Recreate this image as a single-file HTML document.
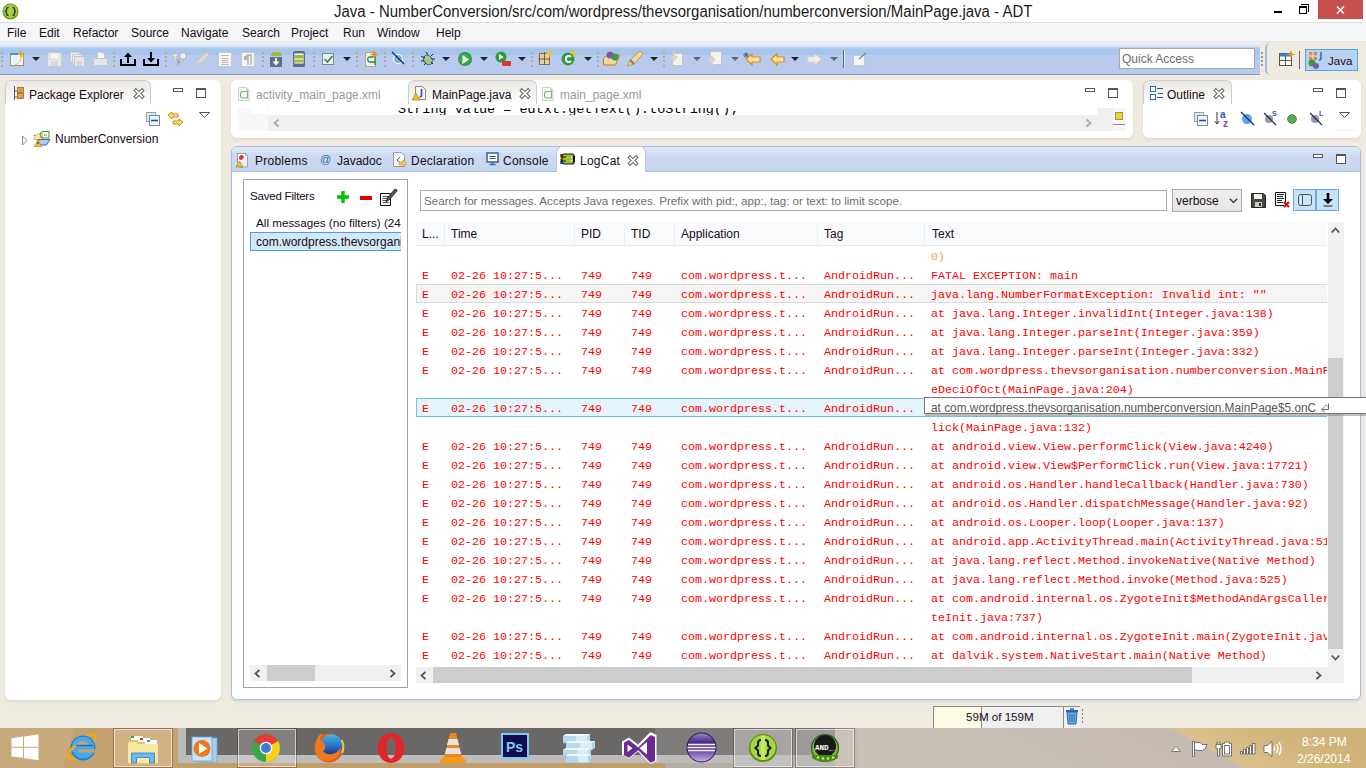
<!DOCTYPE html>
<html><head><meta charset="utf-8">
<style>
*{margin:0;padding:0;box-sizing:border-box}
html,body{width:1366px;height:768px;overflow:hidden;background:#efebe1;font-family:"Liberation Sans",sans-serif;font-size:12px;color:#000}
.a{position:absolute}
.t{position:absolute;white-space:pre;line-height:1}
.m{position:absolute;white-space:pre;line-height:1;font-family:"Liberation Mono",monospace;font-size:11.67px;color:#f00}
svg{position:absolute;overflow:visible}
.panel{position:absolute;background:#fff;border-radius:6px;box-shadow:0 2px 3px rgba(90,80,50,.10)}
</style></head><body>

<div class="a" style="left:0;top:0;width:1366px;height:22px;background:#fff"></div>
<div class="a" style="left:0;top:22px;width:1366px;height:1px;background:#dcdcdc"></div>
<svg style="left:2px;top:3px" width="17" height="17" viewBox="0 0 17 17"><circle cx="8.5" cy="8.5" r="8" fill="#6c9a1c"/><circle cx="8.5" cy="8.2" r="6.8" fill="#a8d236"/><path d="M6.5 4.5q-2 0-2 2v1l-1 1 1 1v1q0 2 2 2M10.5 4.5q2 0 2 2v1l1 1-1 1v1q0 2-2 2" stroke="#333" stroke-width="1.4" fill="none"/></svg>
<div class="t" style="left:334px;top:4px;font-size:16px;color:#1a1a1a;transform:scaleX(.936);transform-origin:0 0">Java - NumberConversion/src/com/wordpress/thevsorganisation/numberconversion/MainPage.java - ADT</div>
<div class="a" style="left:1274px;top:11px;width:8px;height:2px;background:#000"></div>
<div class="a" style="left:1299px;top:6px;width:8px;height:8px;border:1px solid #000;border-top-width:2px"></div>
<div class="a" style="left:1301px;top:4px;width:8px;height:8px;border-top:1px solid #000;border-right:1px solid #000"></div>
<div class="a" style="left:1318px;top:0;width:45px;height:19px;background:#c7504f"></div>
<svg style="left:1336px;top:6px" width="9" height="8"><path d="M1 0.5l7 7M8 0.5l-7 7" stroke="#fff" stroke-width="1.6"/></svg>
<div class="a" style="left:0;top:23px;width:1366px;height:19px;background:#f5f6f7"></div>
<div class="t" style="left:7px;top:27px;color:#1a0a1a">File</div>
<div class="t" style="left:39px;top:27px;color:#1a0a1a">Edit</div>
<div class="t" style="left:73px;top:27px;color:#1a0a1a">Refactor</div>
<div class="t" style="left:131px;top:27px;color:#1a0a1a">Source</div>
<div class="t" style="left:181px;top:27px;color:#1a0a1a">Navigate</div>
<div class="t" style="left:242px;top:27px;color:#1a0a1a">Search</div>
<div class="t" style="left:291px;top:27px;color:#1a0a1a">Project</div>
<div class="t" style="left:343px;top:27px;color:#1a0a1a">Run</div>
<div class="t" style="left:377px;top:27px;color:#1a0a1a">Window</div>
<div class="t" style="left:436px;top:27px;color:#1a0a1a">Help</div>
<div class="a" style="left:0;top:42px;width:1260px;height:32px;background:linear-gradient(#eef3fb 0px,#e2eaf7 3.5px,#a8c5ec 7px,#a7c4eb 12.5px,#b8caed 13px,#b8caed 100%)"></div>
<div class="a" style="left:0;top:74px;width:1260px;height:1px;background:#8596ba"></div>
<div class="a" style="left:0;top:41px;width:1366px;height:1px;background:#e7e8eb"></div>
<div class="a" style="left:1265px;top:43px;width:6px;height:32px;border-left:2px solid #a6bbdd;border-radius:5px 0 0 5px"></div>
<svg class="a" style="left:0;top:42px" width="1262" height="33" viewBox="0 0 1262 33"><rect x="1" y="10" width="2" height="2" fill="#b4aa92"/><rect x="1" y="14" width="2" height="2" fill="#b4aa92"/><rect x="1" y="18" width="2" height="2" fill="#b4aa92"/><rect x="1" y="23" width="2" height="2" fill="#b4aa92"/><rect x="113" y="10" width="2" height="2" fill="#b4aa92"/><rect x="113" y="14" width="2" height="2" fill="#b4aa92"/><rect x="113" y="18" width="2" height="2" fill="#b4aa92"/><rect x="113" y="23" width="2" height="2" fill="#b4aa92"/><rect x="165" y="10" width="2" height="2" fill="#b4aa92"/><rect x="165" y="14" width="2" height="2" fill="#b4aa92"/><rect x="165" y="18" width="2" height="2" fill="#b4aa92"/><rect x="165" y="23" width="2" height="2" fill="#b4aa92"/><rect x="262" y="10" width="2" height="2" fill="#b4aa92"/><rect x="262" y="14" width="2" height="2" fill="#b4aa92"/><rect x="262" y="18" width="2" height="2" fill="#b4aa92"/><rect x="262" y="23" width="2" height="2" fill="#b4aa92"/><rect x="313" y="10" width="2" height="2" fill="#b4aa92"/><rect x="313" y="14" width="2" height="2" fill="#b4aa92"/><rect x="313" y="18" width="2" height="2" fill="#b4aa92"/><rect x="313" y="23" width="2" height="2" fill="#b4aa92"/><rect x="356" y="10" width="2" height="2" fill="#b4aa92"/><rect x="356" y="14" width="2" height="2" fill="#b4aa92"/><rect x="356" y="18" width="2" height="2" fill="#b4aa92"/><rect x="356" y="23" width="2" height="2" fill="#b4aa92"/><rect x="384" y="10" width="2" height="2" fill="#b4aa92"/><rect x="384" y="14" width="2" height="2" fill="#b4aa92"/><rect x="384" y="18" width="2" height="2" fill="#b4aa92"/><rect x="384" y="23" width="2" height="2" fill="#b4aa92"/><rect x="412" y="10" width="2" height="2" fill="#b4aa92"/><rect x="412" y="14" width="2" height="2" fill="#b4aa92"/><rect x="412" y="18" width="2" height="2" fill="#b4aa92"/><rect x="412" y="23" width="2" height="2" fill="#b4aa92"/><rect x="531" y="10" width="2" height="2" fill="#b4aa92"/><rect x="531" y="14" width="2" height="2" fill="#b4aa92"/><rect x="531" y="18" width="2" height="2" fill="#b4aa92"/><rect x="531" y="23" width="2" height="2" fill="#b4aa92"/><rect x="597" y="10" width="2" height="2" fill="#b4aa92"/><rect x="597" y="14" width="2" height="2" fill="#b4aa92"/><rect x="597" y="18" width="2" height="2" fill="#b4aa92"/><rect x="597" y="23" width="2" height="2" fill="#b4aa92"/><rect x="663" y="10" width="2" height="2" fill="#b4aa92"/><rect x="663" y="14" width="2" height="2" fill="#b4aa92"/><rect x="663" y="18" width="2" height="2" fill="#b4aa92"/><rect x="663" y="23" width="2" height="2" fill="#b4aa92"/><rect x="10.5" y="11.5" width="13" height="12" fill="#eaf4fb" stroke="#b39257"/><rect x="10" y="11" width="8" height="2" fill="#4c8fd0"/><path d="M21 9v6M18 12h6" stroke="#e0a020" stroke-width="1.5"/><path d="M21 15q0 6-6 8" stroke="#f0c040" stroke-width="1" fill="none"/><path d="M32 15h8l-4 4z" fill="#222"/><rect x="47.5" y="10.5" width="14" height="14" fill="#e8e8e8" stroke="#c9c9c9"/><rect x="50" y="11" width="9" height="6" fill="#f7f7f7" stroke="#d0d0d0" stroke-width=".7"/><rect x="51" y="19" width="7" height="5" fill="#d8d8d8"/><rect x="70.5" y="10.5" width="9" height="9" fill="#eee" stroke="#ccc"/><rect x="72.5" y="12.5" width="9" height="9" fill="#eee" stroke="#ccc"/><rect x="74.5" y="14.5" width="10" height="10" fill="#e6e6e6" stroke="#c6c6c6"/><rect x="77" y="19" width="5" height="5" fill="#d6d6d6"/><path d="M97.5 10.5h5l2 2v4h-7z" fill="#f4f4f4" stroke="#ccc"/><rect x="93.5" y="16.5" width="14" height="7" rx="1" fill="#e4e4e4" stroke="#c4c4c4"/><path d="M121 17v6h14v-6" stroke="#000" stroke-width="2" fill="none"/><path d="M128 21v-7" stroke="#000" stroke-width="2"/><path d="M124 15l4-4.5 4 4.5z" fill="#000"/><path d="M144 17v6h14v-6" stroke="#000" stroke-width="2" fill="none"/><path d="M151 10v7" stroke="#000" stroke-width="2"/><path d="M147 16l4 4.5 4-4.5z" fill="#000"/><path d="M172 12h6v2h-2v5h-2v-5h-2z" fill="#e4e4e4" stroke="#bbb" stroke-width=".6"/><circle cx="183" cy="14" r="3.5" fill="#eee" stroke="#aaa"/><path d="M177 16v8l4-4z" fill="#a8a8a8"/><path d="M195 23l4-6 8-7 2 3-7 7z" fill="#dcd8cc" stroke="#c8c4b8" stroke-width=".8"/><path d="M194 23.5h7" stroke="#d0ccc0"/><rect x="218.5" y="10.5" width="13" height="14" fill="#f4f4f4" stroke="#c8c8c8"/><path d="M221 13.5h8M222 16.5h6M222 18.5h6M222 20.5h6M221 22.5h8" stroke="#bbb"/><rect x="241.5" y="10.5" width="13" height="14" fill="#f4f4f4" stroke="#c8c8c8"/><path d="M248 13v10M251 13v10M246 13h6" stroke="#b4b4b4" stroke-width="1.5"/><circle cx="246" cy="16" r="2.3" fill="#b4b4b4"/><path d="M271 14a5.5 4 0 0 1 11 0z" fill="#9fbc2e"/><path d="M272.5 9.5l1.5 2M280.5 9.5l-1.5 2" stroke="#9fbc2e"/><rect x="270" y="15" width="12" height="10" fill="#5f7086"/><path d="M276 16v4" stroke="#fff" stroke-width="2"/><path d="M272.5 19.5h7l-3.5 4z" fill="#fff"/><rect x="293" y="9" width="12" height="16" rx="1.5" fill="#5f7086"/><rect x="294.5" y="11.5" width="9" height="10" fill="#fff"/><rect x="294.5" y="13" width="9" height="3.5" fill="#9fbc2e"/><rect x="294.5" y="17.5" width="9" height="3" fill="#9fbc2e"/><rect x="322.5" y="11.5" width="11" height="11" fill="#eaf6fb" stroke="#7c8a9a"/><path d="M324.5 17l3 3 5-6" stroke="#2a8a2a" stroke-width="1.6" fill="none"/><path d="M343 15h8l-4 4z" fill="#222"/><rect x="365.5" y="10.5" width="10" height="14" fill="#eef4f6" stroke="#c0a070"/><path d="M375 20h-6a3 3 0 0 1 0-5h6v8" stroke="#2a8a2a" stroke-width="1.3" fill="none"/><path d="M374 9v7M370.5 12.5h7" stroke="#f08030" stroke-width="1.6"/><circle cx="398" cy="17" r="4.5" fill="#7fb3d5" stroke="#fff" stroke-width="1.2"/><path d="M392 10l12 12" stroke="#0a2a7a" stroke-width="1.2"/><ellipse cx="428" cy="18" rx="4" ry="5" fill="#a6c88a" stroke="#2a5a9a" transform="rotate(-35 428 18)"/><path d="M421 14l4 2M421 19l3 0M424 23l2-2M426 10l2 3M433 12l-2 2M435 17l-3 0M433 22l-2-2" stroke="#222" stroke-width="1"/><path d="M442 15h8l-4 4z" fill="#222"/><circle cx="465" cy="17" r="7" fill="#2a9a3a"/><circle cx="465" cy="17" r="5.5" fill="#3aaa4a"/><path d="M462.5 13v9l6.5-4.5z" fill="#fff"/><path d="M480 15h8l-4 4z" fill="#222"/><circle cx="501" cy="15" r="5.5" fill="#2a9a3a"/><path d="M499 12v6l4.5-3z" fill="#fff"/><rect x="502" y="19" width="9" height="5" rx="1" fill="#d33"/><path d="M518 15h8l-4 4z" fill="#222"/><rect x="539.5" y="11.5" width="10" height="11" fill="#e6cd9a" stroke="#8a6a4a"/><path d="M544.5 10v13M538 17h12" stroke="#7a5a3a"/><path d="M550 8v7M546.5 11.5h7" stroke="#f0c030" stroke-width="1.6"/><circle cx="568" cy="17" r="6.5" fill="#2a9a3a"/><path d="M571 15a3 3 0 1 0 0 4" stroke="#fff" stroke-width="2" fill="none"/><path d="M574 8v7M570.5 11.5h7" stroke="#f0c030" stroke-width="1.6"/><path d="M584 15h8l-4 4z" fill="#222"/><path d="M603.5 16l4-3h12l-4 10h-12z" fill="#f8d898" stroke="#c07a20"/><circle cx="610" cy="13" r="3.5" fill="#7a5aaa"/><circle cx="615" cy="15" r="3.5" fill="#3a9a4a"/><path d="M627 24l3-6 10-9 3 3-9 10z" fill="#f8d890" stroke="#c08a30" stroke-width=".8"/><path d="M630 18l4 4" stroke="#888" stroke-width="2.5"/><path d="M650 15h8l-4 4z" fill="#222"/><rect x="672.5" y="11.5" width="10" height="12" fill="#f4f2ec" stroke="#c8c4b8"/><path d="M674 9v8M671 14l3 4 3-4" stroke="#d8d4c8" stroke-width="2" fill="none"/><path d="M693 15h8l-4 4z" fill="#666"/><rect x="710.5" y="9.5" width="11" height="13" fill="#f4f2ec" stroke="#c8c4b8"/><path d="M712 24v-8M709 19l3-4 3 4" stroke="#d8d4c8" stroke-width="2" fill="none"/><path d="M731 15h8l-4 4z" fill="#666"/><path d="M746 17l6-5v3h8v5h-8v3z" fill="#fce4a0" stroke="#e08a10" stroke-width="1.2"/><path d="M744 11l4 4M748 11l-4 4M746 10v6M743 13h6" stroke="#2a5aaa" stroke-width=".8"/><path d="M771 17l6-5v3h7v5h-7v3z" fill="#fce4a0" stroke="#e08a10" stroke-width="1.2"/><path d="M791 15h8l-4 4z" fill="#222"/><path d="M821 17l-6-5v3h-7v5h7v3z" fill="#f0eee6" stroke="#dcd8c8" stroke-width="1"/><path d="M830 15h8l-4 4z" fill="#666"/><rect x="843" y="8" width="1" height="18" fill="#5a6a7a"/><rect x="844" y="8" width="1" height="18" fill="#e0e8f4"/><rect x="853.5" y="13.5" width="11" height="10" fill="#f4f4f4" stroke="#c8c8c8"/><path d="M859 17l7-6" stroke="#888" stroke-width="1.4"/></svg>
<div class="a" style="left:1119px;top:48px;width:136px;height:21px;background:#fff;border:1px solid #a9a9a9"></div>
<div class="t" style="left:1122px;top:53px;color:#6d6d6d;font-size:12px">Quick Access</div>
<div class="a" style="left:1261px;top:52px;width:2px;height:2px;background:#a09a8a"></div>
<div class="a" style="left:1261px;top:56px;width:2px;height:2px;background:#a09a8a"></div>
<div class="a" style="left:1261px;top:60px;width:2px;height:2px;background:#a09a8a"></div>
<div class="a" style="left:1261px;top:64px;width:2px;height:2px;background:#a09a8a"></div>
<svg style="left:1279px;top:51px" width="16" height="16"><rect x="0.5" y="2.5" width="12" height="12" fill="#fff" stroke="#555"/><rect x="0.5" y="2.5" width="12" height="3" fill="#3b7bd0"/><path d="M6.5 5v10M1 9.5h11" stroke="#555"/><path d="M12 0v7M8.5 3.5h7" stroke="#e0a020" stroke-width="1.5"/></svg>
<div class="a" style="left:1299px;top:51px;width:1px;height:18px;background:#666"></div>
<div class="a" style="left:1305px;top:49px;width:53px;height:22px;background:#b7d3ef;border:1px solid #5aa0e6"></div>
<svg style="left:1308px;top:52px" width="18" height="17"><rect x="1" y="0" width="8" height="8" fill="#c8906a"/><path d="M5 0v8M1 4h8" stroke="#fff" stroke-width=".8"/><path d="M13 0v6q0 2-2 2" stroke="#2a6ab8" stroke-width="1.5" fill="none"/><circle cx="4" cy="11" r="3.5" fill="#3a9a3a"/><circle cx="8" cy="14" r="3" fill="#7a5ab0"/></svg>
<div class="t" style="left:1328px;top:56px;color:#1a0a1a;font-size:11.5px">Java</div>
<div class="panel" style="left:5px;top:80px;width:216px;height:620px"></div>
<div class="a" style="left:5px;top:80px;width:146px;height:24px;border-radius:6px 6px 0 0;border:1px solid #c8d0dc;border-bottom:none;background:linear-gradient(#ece9e2,#f6f5f2 60%,#fff)"></div>
<svg style="left:13px;top:86px" width="12" height="14"><path d="M1.5 0v14M1.5 5h3M1.5 11h3" stroke="#556" stroke-width="1"/><rect x="4.5" y="1.5" width="6" height="5" fill="#d9a050" stroke="#b06020" stroke-width=".8"/><rect x="4.5" y="7.5" width="6" height="5" fill="#d9a050" stroke="#b06020" stroke-width=".8"/></svg>
<div class="t" style="left:29px;top:89px;color:#1a0a1a">Package Explorer</div>
<svg style="left:133px;top:88px" width="12" height="12"><path d="M2.9 2.4l6.2 6.2M9.1 2.4l-6.2 6.2" stroke="#606060" stroke-width="3.6" stroke-linecap="square"/><path d="M2.9 2.4l6.2 6.2M9.1 2.4l-6.2 6.2" stroke="#fff" stroke-width="1.6" stroke-linecap="square"/></svg>
<div class="a" style="left:173px;top:88px;width:10px;height:4px;border:1px solid #555;background:#fff"></div>
<div class="a" style="left:196px;top:88px;width:10px;height:10px;border:1px solid #555;border-top-width:2px;background:#fff"></div>
<svg style="left:146px;top:112px" width="14" height="14"><rect x="0.5" y="0.5" width="9" height="9" fill="#dde8f4" stroke="#8aa"/><rect x="3.5" y="3.5" width="10" height="10" fill="#eef4fa" stroke="#6a8ab0"/><path d="M5 8.5h7" stroke="#1a4a9a" stroke-width="1.5"/></svg>
<svg style="left:167px;top:111px" width="17" height="16"><path d="M1 4l4-3v2h6v3h-6v2z" fill="#fcdc80" stroke="#d08a10"/><path d="M16 11l-4-3v2h-6v3h6v2z" fill="#fcdc80" stroke="#d08a10"/></svg>
<svg style="left:199px;top:112px" width="11" height="7"><path d="M0.5 0.5h10l-5 5z" fill="#fff" stroke="#555"/></svg>
<svg style="left:21px;top:135px" width="7" height="11"><path d="M1.5 1l4.5 4.5-4.5 4.5z" fill="#fff" stroke="#888"/></svg>
<svg style="left:33px;top:130px" width="18" height="18"><path d="M1 5h3l1.5-1.5h4v6h-8.5z" fill="#f6e4b0" stroke="#c8a860" stroke-width=".7"/><path d="M1 6l1-1" stroke="#666"/><path d="M5 9.5h12l-3.5 5.5h-8z" fill="#a8d0f4" stroke="#3a5ab0" stroke-width=".9"/><path d="M16 1.5h-5.5a2.2 2.2 0 0 0 0 6.5h5.5z" fill="none" stroke="#5a9a20" stroke-width="1.1"/><path d="M11 5h3" stroke="#5a9a20"/><path d="M5 10l3.8 6.5h-7.6z" fill="#f4c040" stroke="#c07a10" stroke-width=".7"/><path d="M5 12v2.3" stroke="#611" stroke-width="1.1"/></svg>
<div class="t" style="left:55px;top:133px;color:#1a0a1a">NumberConversion</div>
<div class="panel" style="left:231px;top:80px;width:902px;height:58px"></div>
<svg style="left:237px;top:86px" width="13" height="15"><path d="M1.5 1.5h8l2.5 2.5v10.5h-10.5z" fill="#f6f9fd" stroke="#cfcfcf"/><path d="M9 1.5h1l2 2v1h-3z" fill="#f8c890"/><path d="M10 5.5h-5l-1.5 1.5v3.5l1.5 1.5h5M10.5 5v7.5" stroke="#7ab86a" stroke-width="1.1" fill="none"/></svg>
<div class="t" style="left:256px;top:89px;color:#9a9a9a">activity_main_page.xml</div>
<div class="a" style="left:408px;top:80px;width:129px;height:24px;border-radius:6px 6px 0 0;border:1px solid #c8d0dc;border-bottom:none;background:linear-gradient(#ece9e2,#f6f5f2 60%,#fff)"></div>
<svg style="left:412px;top:86px" width="14" height="15"><path d="M3.5 0.5h7l3 3v10h-10z" fill="#eef4fc" stroke="#8a6a4a" stroke-width=".8"/><path d="M9.5 3v6q0 2-2 2" stroke="#2a5ab0" stroke-width="1.6" fill="none"/><path d="M4 7l4 7h-8z" fill="#f4c020" stroke="#a07010" stroke-width=".6"/></svg>
<div class="t" style="left:432px;top:89px;color:#1a0a1a">MainPage.java</div>
<svg style="left:519px;top:88px" width="12" height="12"><path d="M2.9 2.4l6.2 6.2M9.1 2.4l-6.2 6.2" stroke="#606060" stroke-width="3.6" stroke-linecap="square"/><path d="M2.9 2.4l6.2 6.2M9.1 2.4l-6.2 6.2" stroke="#fff" stroke-width="1.6" stroke-linecap="square"/></svg>
<svg style="left:541px;top:86px" width="13" height="15"><path d="M1.5 1.5h8l2.5 2.5v10.5h-10.5z" fill="#f6f9fd" stroke="#cfcfcf"/><path d="M9 1.5h1l2 2v1h-3z" fill="#f8c890"/><path d="M10 5.5h-5l-1.5 1.5v3.5l1.5 1.5h5M10.5 5v7.5" stroke="#7ab86a" stroke-width="1.1" fill="none"/></svg>
<div class="t" style="left:560px;top:89px;color:#9a9a9a">main_page.xml</div>
<div class="a" style="left:1085px;top:88px;width:10px;height:4px;border:1px solid #555;background:#fff"></div>
<div class="a" style="left:1108px;top:88px;width:10px;height:10px;border:1px solid #555;border-top-width:2px;background:#fff"></div>
<div class="a" style="left:238px;top:108px;width:880px;height:7px;overflow:hidden"><div class="t" style="left:160px;top:-5px;font-family:'Liberation Mono',monospace;font-size:13.5px;color:#000">String value = edtxt.getText().toString();</div></div>
<div class="a" style="left:238px;top:108px;width:30px;height:23px;background:#f7f7f7"></div>
<div class="a" style="left:250px;top:108px;width:17px;height:6px;background:#fff"></div>
<div class="a" style="left:268px;top:115px;width:845px;height:16px;background:#efefef"></div>
<div class="a" style="left:1097px;top:108px;width:16px;height:8px;background:#efefef"></div>
<svg style="left:273px;top:119px" width="7" height="8"><path d="M5.5 0.5l-4 3.5 4 3.5" stroke="#aaa" stroke-width="1.8" fill="none"/></svg>
<svg style="left:1085px;top:119px" width="7" height="8"><path d="M1.5 0.5l4 3.5-4 3.5" stroke="#aaa" stroke-width="1.8" fill="none"/></svg>
<div class="a" style="left:1113px;top:108px;width:13px;height:23px;background:#f7f7f7"></div>
<div class="a" style="left:1115px;top:112px;width:8px;height:8px;background:#fcd400;border:1px solid #8a90a4"></div>
<div class="a" style="left:1113px;top:124px;width:12px;height:1px;background:#888"></div>
<div class="panel" style="left:1143px;top:80px;width:218px;height:58px"></div>
<div class="a" style="left:1143px;top:80px;width:89px;height:24px;border-radius:6px 6px 0 0;border:1px solid #c8d0dc;border-bottom:none;background:linear-gradient(#ece9e2,#f6f5f2 60%,#fff)"></div>
<svg style="left:1150px;top:86px" width="14" height="14"><rect x="0.5" y="0.5" width="5" height="5" fill="#fff" stroke="#2a6ab8"/><rect x="0.5" y="8.5" width="5" height="5" fill="#fff" stroke="#2a6ab8"/><path d="M7 2.5h6M8 7.5h5M7 11.5h6" stroke="#2a5a9a"/></svg>
<div class="t" style="left:1167px;top:89px;color:#1a0a1a">Outline</div>
<svg style="left:1213px;top:88px" width="12" height="12"><path d="M2.9 2.4l6.2 6.2M9.1 2.4l-6.2 6.2" stroke="#606060" stroke-width="3.6" stroke-linecap="square"/><path d="M2.9 2.4l6.2 6.2M9.1 2.4l-6.2 6.2" stroke="#fff" stroke-width="1.6" stroke-linecap="square"/></svg>
<div class="a" style="left:1313px;top:88px;width:10px;height:4px;border:1px solid #555;background:#fff"></div>
<div class="a" style="left:1336px;top:88px;width:10px;height:10px;border:1px solid #555;border-top-width:2px;background:#fff"></div>
<svg style="left:1194px;top:112px" width="14" height="14"><rect x="0.5" y="0.5" width="9" height="9" fill="#dde8f4" stroke="#8aa"/><rect x="3.5" y="3.5" width="10" height="10" fill="#eef4fa" stroke="#6a8ab0"/><path d="M5 8.5h7" stroke="#1a4a9a" stroke-width="1.5"/></svg>
<svg style="left:1214px;top:110px" width="18" height="18"><path d="M3 2v12M0.5 11l2.5 3 2.5-3" stroke="#333" fill="none"/><text x="6" y="8" font-size="10" font-weight="bold" fill="#2a5aa8" font-family="Liberation Sans">a</text><text x="9" y="17" font-size="10" font-weight="bold" fill="#8a3aa0" font-family="Liberation Sans">z</text></svg>
<svg style="left:1240px;top:111px" width="15" height="15"><circle cx="7" cy="8" r="5.5" fill="#5aa6e0" stroke="#fff" stroke-width="1"/><path d="M1 1l13 13" stroke="#0a2a7a" stroke-width="1.2"/></svg>
<svg style="left:1263px;top:110px" width="15" height="16"><circle cx="6" cy="9" r="4" fill="#999"/><path d="M1 3l12 12" stroke="#0a2a7a" stroke-width="1.2"/><text x="9" y="6" font-size="7" font-weight="bold" fill="#2a5aa8" font-family="Liberation Sans">S</text></svg>
<svg style="left:1287px;top:114px" width="10" height="10"><circle cx="5" cy="5" r="4.3" fill="#5aaa5a" stroke="#3a8a3a"/></svg>
<svg style="left:1309px;top:110px" width="15" height="16"><circle cx="6" cy="9" r="4" fill="#999"/><path d="M1 3l12 12" stroke="#0a2a7a" stroke-width="1.2"/><text x="10" y="6" font-size="7" font-weight="bold" fill="#2a5aa8" font-family="Liberation Sans">L</text></svg>
<svg style="left:1339px;top:112px" width="11" height="7"><path d="M0.5 0.5h10l-5 5z" fill="#fff" stroke="#555"/></svg>
<div class="a" style="left:1337px;top:130px;width:18px;height:1px;background:#eee"></div>
<div class="panel" style="left:231px;top:146px;width:1130px;height:554px;border:1px solid #a6bde0"></div>
<div class="a" style="left:232px;top:147px;width:1128px;height:24px;border-radius:5px 5px 0 0;background:linear-gradient(#dfe8f5,#cbdaf0 40%,#c6d6ef)"></div>
<div class="a" style="left:232px;top:171px;width:1128px;height:1px;background:#a9bcdc"></div>
<svg style="left:236px;top:153px" width="14" height="15"><rect x="1.5" y="0.5" width="8" height="9" fill="#fff" stroke="#888" stroke-width=".8"/><circle cx="5.5" cy="4.5" r="2.5" fill="#e03030"/><path d="M9.5 2h2v12h-8v-4" fill="#eef" stroke="#8899aa" stroke-width=".8"/><path d="M3.5 8l3.5 6h-7z" fill="#f4c020" stroke="#a07010" stroke-width=".6"/></svg>
<div class="t" style="left:255px;top:155px;color:#1a0a1a;letter-spacing:.25px">Problems</div>
<div class="t" style="left:320px;top:154px;color:#2a70b0;font-size:11px">@</div>
<div class="t" style="left:337px;top:155px;color:#1a0a1a">Javadoc</div>
<svg style="left:393px;top:152px" width="14" height="16"><path d="M0.5 0.5h8l3 3v11h-11z" fill="#f8f8f4" stroke="#888" stroke-width=".8"/><path d="M7 5l-3 3 3 3" stroke="#2a6ab0" fill="none"/><path d="M6 10h4v-2l4 3.5-4 3.5v-2h-4z" fill="#f4c860" stroke="#c08a20" stroke-width=".6"/></svg>
<div class="t" style="left:411px;top:155px;color:#1a0a1a;letter-spacing:.25px">Declaration</div>
<svg style="left:486px;top:152px" width="13" height="14"><rect x="1" y="1" width="11" height="9" fill="#fff" stroke="#3a6aa8" stroke-width="1.6"/><path d="M3.5 4.5h6M3.5 6.5h4M7.5 6.5h2" stroke="#2a4a88" stroke-width="1"/><path d="M6.5 10v2M3.5 12.5h6" stroke="#3a6aa8" stroke-width="1.4"/></svg>
<div class="t" style="left:503px;top:155px;color:#1a0a1a;letter-spacing:.25px">Console</div>
<div class="a" style="left:556px;top:146px;width:90px;height:26px;background:#fff;border-radius:6px 6px 0 0;border:1px solid #b8c8e0;border-bottom:none"></div>
<svg style="left:560px;top:153px" width="17" height="13"><path d="M0 1h5v10h-5z" fill="#f33"/><path d="M0 4h4v2h-4z" fill="#fc0"/><path d="M0 6h4v2h-4z" fill="#3c3"/><path d="M0 8h4v3h-4z" fill="#36f"/><rect x="2" y="1" width="12" height="10" rx="2" fill="#9cc23c" stroke="#111" stroke-width="1.2"/><path d="M2 4h4M2 8h4" stroke="#111" stroke-width="1.2"/><path d="M14 3v6" stroke="#111" stroke-width="2"/><circle cx="11.5" cy="4.5" r=".8" fill="#fff"/><circle cx="11.5" cy="7.5" r=".8" fill="#fff"/></svg>
<div class="t" style="left:580px;top:155px;color:#1a0a1a;letter-spacing:.25px">LogCat</div>
<svg style="left:627px;top:155px" width="12" height="12"><path d="M2.9 2.4l6.2 6.2M9.1 2.4l-6.2 6.2" stroke="#606060" stroke-width="3.6" stroke-linecap="square"/><path d="M2.9 2.4l6.2 6.2M9.1 2.4l-6.2 6.2" stroke="#fff" stroke-width="1.6" stroke-linecap="square"/></svg>
<div class="a" style="left:1313px;top:154px;width:10px;height:4px;border:1px solid #555;background:#fff"></div>
<div class="a" style="left:1336px;top:154px;width:10px;height:10px;border:1px solid #555;border-top-width:2px;background:#fff"></div>
<div class="a" style="left:243px;top:179px;width:165px;height:509px;border:1px solid #a3a3a3;background:#fff"></div>
<div class="t" style="left:250px;top:191px;color:#1a0a1a;font-size:11.5px;letter-spacing:-.2px">Saved Filters</div>
<svg style="left:337px;top:191px" width="12" height="12"><path d="M6 0v12M0 6h12" stroke="#00c400" stroke-width="3.4"/></svg>
<div class="a" style="left:360px;top:196px;width:12px;height:4px;background:#e00000"></div>
<svg style="left:380px;top:188px" width="18" height="18"><path d="M0.5 5.5h10v12h-10z" fill="#fff" stroke="#111"/><path d="M2.5 8.5h6M2.5 10.5h6M2.5 12.5h6M2.5 14.5h6" stroke="#222" stroke-width=".8"/><path d="M6 14l2-5 7-8q2 0 2 2l-7 8z" fill="#555" stroke="#222" stroke-width=".8"/></svg>
<div class="t" style="left:256px;top:217px;color:#1a0a1a;font-size:11.7px">All messages (no filters) (24</div>
<div class="a" style="left:250px;top:232px;width:151px;height:19px;background:#d2e8f6;border:1px solid #4aa0de;border-right:none;overflow:hidden"><div class="t" style="left:5px;top:3px;color:#1a0a1a">com.wordpress.thevsorganisation</div></div>
<div class="a" style="left:250px;top:665px;width:151px;height:16px;background:#f0f0f0"></div>
<div class="a" style="left:267px;top:665px;width:48px;height:16px;background:#cdcdcd"></div>
<svg style="left:254px;top:669px" width="7" height="9"><path d="M5.5 0.8l-4 3.7 4 3.7" stroke="#555" stroke-width="1.8" fill="none"/></svg>
<svg style="left:389px;top:669px" width="7" height="9"><path d="M1.5 0.8l4 3.7-4 3.7" stroke="#555" stroke-width="1.8" fill="none"/></svg>
<div class="a" style="left:420px;top:190px;width:747px;height:21px;border:1px solid #ababab;background:#fff"></div>
<div class="t" style="left:424px;top:195px;color:#6d6d6d;font-size:11.6px">Search for messages. Accepts Java regexes. Prefix with pid:, app:, tag: or text: to limit scope.</div>
<div class="a" style="left:1172px;top:189px;width:70px;height:23px;border:1px solid #acacac;background:linear-gradient(#f0f0f0,#e5e5e5)"></div>
<div class="t" style="left:1176px;top:195px;color:#1a0a1a">verbose</div>
<svg style="left:1229px;top:198px" width="9" height="6"><path d="M0.8 0.8l3.7 3.7 3.7-3.7" stroke="#444" stroke-width="1.5" fill="none"/></svg>
<svg style="left:1251px;top:193px" width="15" height="15"><path d="M0.5 0.5h12l2 2v12h-14z" fill="#4a4a3a" stroke="#222"/><rect x="3" y="1" width="8" height="5" fill="#f0f0f0"/><rect x="4" y="9" width="7" height="5" fill="#ccc"/><rect x="8" y="10" width="2" height="3" fill="#333"/></svg>
<svg style="left:1275px;top:192px" width="15" height="17"><path d="M0.5 0.5h10v13h-10z" fill="#fff" stroke="#111"/><path d="M2 2.5h7M2 4.5h6M2 6.5h7M2 8.5h5M2 10.5h6" stroke="#222" stroke-width="1"/><path d="M9 10l5 5M14 10l-5 5" stroke="#e00" stroke-width="2"/></svg>
<div class="a" style="left:1293px;top:189px;width:46px;height:22px;border:1px solid #66a8ea;background:#c8e3fa"></div>
<div class="a" style="left:1315px;top:189px;width:2px;height:22px;background:#66a8ea"></div>
<svg style="left:1298px;top:194px" width="14" height="13"><rect x="0.5" y="0.5" width="13" height="11" rx="2" fill="none" stroke="#555"/><path d="M4.5 0.5v11" stroke="#555"/></svg>
<svg style="left:1321px;top:193px" width="14" height="14"><path d="M7 0v7" stroke="#000" stroke-width="2.6"/><path d="M2 6h10l-5 5z" fill="#000"/><path d="M2.5 13h9" stroke="#555" stroke-width="1.4"/></svg>
<div class="a" style="left:416px;top:222px;width:911px;height:24px;background:#fafbfc;border-bottom:1px solid #e3ecf6"></div>
<div class="a" style="left:444px;top:222px;width:1px;height:23px;background:#eaf0f7"></div>
<div class="a" style="left:574px;top:222px;width:1px;height:23px;background:#eaf0f7"></div>
<div class="a" style="left:624px;top:222px;width:1px;height:23px;background:#eaf0f7"></div>
<div class="a" style="left:674px;top:222px;width:1px;height:23px;background:#eaf0f7"></div>
<div class="a" style="left:817px;top:222px;width:1px;height:23px;background:#eaf0f7"></div>
<div class="a" style="left:924px;top:222px;width:1px;height:23px;background:#eaf0f7"></div>
<div class="t" style="left:422px;top:228px;color:#1a0a1a">L...</div>
<div class="t" style="left:451px;top:228px;color:#1a0a1a">Time</div>
<div class="t" style="left:581px;top:228px;color:#1a0a1a">PID</div>
<div class="t" style="left:631px;top:228px;color:#1a0a1a">TID</div>
<div class="t" style="left:681px;top:228px;color:#1a0a1a">Application</div>
<div class="t" style="left:824px;top:228px;color:#1a0a1a">Tag</div>
<div class="t" style="left:932px;top:228px;color:#1a0a1a">Text</div>
<div class="a" style="left:1328px;top:222px;width:16px;height:445px;background:#f0f0f0"></div>
<div class="a" style="left:1328px;top:358px;width:15px;height:291px;background:#cdcdcd"></div>
<svg style="left:1331px;top:227px" width="9" height="7"><path d="M0.8 5.5l3.7-4 3.7 4" stroke="#555" stroke-width="1.8" fill="none"/></svg>
<svg style="left:1331px;top:654px" width="9" height="7"><path d="M0.8 1.5l3.7 4 3.7-4" stroke="#555" stroke-width="1.8" fill="none"/></svg>
<div class="a" style="left:416px;top:667px;width:928px;height:16px;background:#f0f0f0"></div>
<div class="a" style="left:433px;top:667px;width:759px;height:16px;background:#cdcdcd"></div>
<svg style="left:420px;top:671px" width="7" height="9"><path d="M5.5 0.8l-4 3.7 4 3.7" stroke="#555" stroke-width="1.8" fill="none"/></svg>
<svg style="left:1315px;top:671px" width="7" height="9"><path d="M1.5 0.8l4 3.7-4 3.7" stroke="#555" stroke-width="1.8" fill="none"/></svg>
<div class="a" style="left:416px;top:246px;width:911px;height:420px;overflow:hidden">
<div class="m" style="left:515px;top:5.5px;color:#f7a040">0)</div>
<div class="m" style="left:6px;top:24.5px">E</div>
<div class="m" style="left:35px;top:24.5px">02-26 10:27:5...</div>
<div class="m" style="left:165px;top:24.5px">749</div>
<div class="m" style="left:215px;top:24.5px">749</div>
<div class="m" style="left:265px;top:24.5px">com.wordpress.t...</div>
<div class="m" style="left:408px;top:24.5px">AndroidRun...</div>
<div class="m" style="left:515px;top:24.5px;color:#f00">FATAL EXCEPTION: main</div>
<div class="a" style="left:0;top:37.5px;width:911px;height:19px;background:#f5f5f5;border:1px solid #dadada;border-right:none"></div>
<div class="m" style="left:6px;top:43.5px">E</div>
<div class="m" style="left:35px;top:43.5px">02-26 10:27:5...</div>
<div class="m" style="left:165px;top:43.5px">749</div>
<div class="m" style="left:215px;top:43.5px">749</div>
<div class="m" style="left:265px;top:43.5px">com.wordpress.t...</div>
<div class="m" style="left:408px;top:43.5px">AndroidRun...</div>
<div class="m" style="left:515px;top:43.5px;color:#f00">java.lang.NumberFormatException: Invalid int: &quot;&quot;</div>
<div class="m" style="left:6px;top:62.5px">E</div>
<div class="m" style="left:35px;top:62.5px">02-26 10:27:5...</div>
<div class="m" style="left:165px;top:62.5px">749</div>
<div class="m" style="left:215px;top:62.5px">749</div>
<div class="m" style="left:265px;top:62.5px">com.wordpress.t...</div>
<div class="m" style="left:408px;top:62.5px">AndroidRun...</div>
<div class="m" style="left:515px;top:62.5px;color:#f00">at java.lang.Integer.invalidInt(Integer.java:138)</div>
<div class="m" style="left:6px;top:81.5px">E</div>
<div class="m" style="left:35px;top:81.5px">02-26 10:27:5...</div>
<div class="m" style="left:165px;top:81.5px">749</div>
<div class="m" style="left:215px;top:81.5px">749</div>
<div class="m" style="left:265px;top:81.5px">com.wordpress.t...</div>
<div class="m" style="left:408px;top:81.5px">AndroidRun...</div>
<div class="m" style="left:515px;top:81.5px;color:#f00">at java.lang.Integer.parseInt(Integer.java:359)</div>
<div class="m" style="left:6px;top:100.5px">E</div>
<div class="m" style="left:35px;top:100.5px">02-26 10:27:5...</div>
<div class="m" style="left:165px;top:100.5px">749</div>
<div class="m" style="left:215px;top:100.5px">749</div>
<div class="m" style="left:265px;top:100.5px">com.wordpress.t...</div>
<div class="m" style="left:408px;top:100.5px">AndroidRun...</div>
<div class="m" style="left:515px;top:100.5px;color:#f00">at java.lang.Integer.parseInt(Integer.java:332)</div>
<div class="m" style="left:6px;top:119.5px">E</div>
<div class="m" style="left:35px;top:119.5px">02-26 10:27:5...</div>
<div class="m" style="left:165px;top:119.5px">749</div>
<div class="m" style="left:215px;top:119.5px">749</div>
<div class="m" style="left:265px;top:119.5px">com.wordpress.t...</div>
<div class="m" style="left:408px;top:119.5px">AndroidRun...</div>
<div class="m" style="left:515px;top:119.5px;color:#f00">at com.wordpress.thevsorganisation.numberconversion.MainPage.convert</div>
<div class="m" style="left:515px;top:138.5px;color:#f00">eDeciOfOct(MainPage.java:204)</div>
<div class="a" style="left:0;top:152px;width:911px;height:19px;background:#e5f3fb;border:1px solid #70c0e8;border-right:none"></div>
<div class="m" style="left:6px;top:157.5px">E</div>
<div class="m" style="left:35px;top:157.5px">02-26 10:27:5...</div>
<div class="m" style="left:165px;top:157.5px">749</div>
<div class="m" style="left:215px;top:157.5px">749</div>
<div class="m" style="left:265px;top:157.5px">com.wordpress.t...</div>
<div class="m" style="left:408px;top:157.5px">AndroidRun...</div>
<div class="m" style="left:515px;top:157.5px;color:#f00">at com.wordpress.thevsorganisation.numberconversion.MainPage$5.onC</div>
<div class="m" style="left:515px;top:176.5px;color:#f00">lick(MainPage.java:132)</div>
<div class="m" style="left:6px;top:195.5px">E</div>
<div class="m" style="left:35px;top:195.5px">02-26 10:27:5...</div>
<div class="m" style="left:165px;top:195.5px">749</div>
<div class="m" style="left:215px;top:195.5px">749</div>
<div class="m" style="left:265px;top:195.5px">com.wordpress.t...</div>
<div class="m" style="left:408px;top:195.5px">AndroidRun...</div>
<div class="m" style="left:515px;top:195.5px;color:#f00">at android.view.View.performClick(View.java:4240)</div>
<div class="m" style="left:6px;top:214.5px">E</div>
<div class="m" style="left:35px;top:214.5px">02-26 10:27:5...</div>
<div class="m" style="left:165px;top:214.5px">749</div>
<div class="m" style="left:215px;top:214.5px">749</div>
<div class="m" style="left:265px;top:214.5px">com.wordpress.t...</div>
<div class="m" style="left:408px;top:214.5px">AndroidRun...</div>
<div class="m" style="left:515px;top:214.5px;color:#f00">at android.view.View$PerformClick.run(View.java:17721)</div>
<div class="m" style="left:6px;top:233.5px">E</div>
<div class="m" style="left:35px;top:233.5px">02-26 10:27:5...</div>
<div class="m" style="left:165px;top:233.5px">749</div>
<div class="m" style="left:215px;top:233.5px">749</div>
<div class="m" style="left:265px;top:233.5px">com.wordpress.t...</div>
<div class="m" style="left:408px;top:233.5px">AndroidRun...</div>
<div class="m" style="left:515px;top:233.5px;color:#f00">at android.os.Handler.handleCallback(Handler.java:730)</div>
<div class="m" style="left:6px;top:252.5px">E</div>
<div class="m" style="left:35px;top:252.5px">02-26 10:27:5...</div>
<div class="m" style="left:165px;top:252.5px">749</div>
<div class="m" style="left:215px;top:252.5px">749</div>
<div class="m" style="left:265px;top:252.5px">com.wordpress.t...</div>
<div class="m" style="left:408px;top:252.5px">AndroidRun...</div>
<div class="m" style="left:515px;top:252.5px;color:#f00">at android.os.Handler.dispatchMessage(Handler.java:92)</div>
<div class="m" style="left:6px;top:271.5px">E</div>
<div class="m" style="left:35px;top:271.5px">02-26 10:27:5...</div>
<div class="m" style="left:165px;top:271.5px">749</div>
<div class="m" style="left:215px;top:271.5px">749</div>
<div class="m" style="left:265px;top:271.5px">com.wordpress.t...</div>
<div class="m" style="left:408px;top:271.5px">AndroidRun...</div>
<div class="m" style="left:515px;top:271.5px;color:#f00">at android.os.Looper.loop(Looper.java:137)</div>
<div class="m" style="left:6px;top:290.5px">E</div>
<div class="m" style="left:35px;top:290.5px">02-26 10:27:5...</div>
<div class="m" style="left:165px;top:290.5px">749</div>
<div class="m" style="left:215px;top:290.5px">749</div>
<div class="m" style="left:265px;top:290.5px">com.wordpress.t...</div>
<div class="m" style="left:408px;top:290.5px">AndroidRun...</div>
<div class="m" style="left:515px;top:290.5px;color:#f00">at android.app.ActivityThread.main(ActivityThread.java:5103)</div>
<div class="m" style="left:6px;top:309.5px">E</div>
<div class="m" style="left:35px;top:309.5px">02-26 10:27:5...</div>
<div class="m" style="left:165px;top:309.5px">749</div>
<div class="m" style="left:215px;top:309.5px">749</div>
<div class="m" style="left:265px;top:309.5px">com.wordpress.t...</div>
<div class="m" style="left:408px;top:309.5px">AndroidRun...</div>
<div class="m" style="left:515px;top:309.5px;color:#f00">at java.lang.reflect.Method.invokeNative(Native Method)</div>
<div class="m" style="left:6px;top:328.5px">E</div>
<div class="m" style="left:35px;top:328.5px">02-26 10:27:5...</div>
<div class="m" style="left:165px;top:328.5px">749</div>
<div class="m" style="left:215px;top:328.5px">749</div>
<div class="m" style="left:265px;top:328.5px">com.wordpress.t...</div>
<div class="m" style="left:408px;top:328.5px">AndroidRun...</div>
<div class="m" style="left:515px;top:328.5px;color:#f00">at java.lang.reflect.Method.invoke(Method.java:525)</div>
<div class="m" style="left:6px;top:347.5px">E</div>
<div class="m" style="left:35px;top:347.5px">02-26 10:27:5...</div>
<div class="m" style="left:165px;top:347.5px">749</div>
<div class="m" style="left:215px;top:347.5px">749</div>
<div class="m" style="left:265px;top:347.5px">com.wordpress.t...</div>
<div class="m" style="left:408px;top:347.5px">AndroidRun...</div>
<div class="m" style="left:515px;top:347.5px;color:#f00">at com.android.internal.os.ZygoteInit$MethodAndArgsCaller.run(Zygo</div>
<div class="m" style="left:515px;top:366.5px;color:#f00">teInit.java:737)</div>
<div class="m" style="left:6px;top:385.5px">E</div>
<div class="m" style="left:35px;top:385.5px">02-26 10:27:5...</div>
<div class="m" style="left:165px;top:385.5px">749</div>
<div class="m" style="left:215px;top:385.5px">749</div>
<div class="m" style="left:265px;top:385.5px">com.wordpress.t...</div>
<div class="m" style="left:408px;top:385.5px">AndroidRun...</div>
<div class="m" style="left:515px;top:385.5px;color:#f00">at com.android.internal.os.ZygoteInit.main(ZygoteInit.java:553)</div>
<div class="m" style="left:6px;top:404.5px">E</div>
<div class="m" style="left:35px;top:404.5px">02-26 10:27:5...</div>
<div class="m" style="left:165px;top:404.5px">749</div>
<div class="m" style="left:215px;top:404.5px">749</div>
<div class="m" style="left:265px;top:404.5px">com.wordpress.t...</div>
<div class="m" style="left:408px;top:404.5px">AndroidRun...</div>
<div class="m" style="left:515px;top:404.5px;color:#f00">at dalvik.system.NativeStart.main(Native Method)</div>
</div>
<div class="a" style="left:925px;top:400px;width:441px;height:16px;background:#8a8a8a;opacity:.55"></div>
<div class="a" style="left:924px;top:397px;width:442px;height:17px;background:#fff;border:1px solid #767676;border-right:none"></div>
<div class="t" style="left:931px;top:402.5px;color:#575757;font-size:11.85px">at com.wordpress.thevsorganisation.numberconversion.MainPage$5.onC</div>
<svg style="left:1321px;top:403px" width="9" height="9"><path d="M7.5 0.5v6h-6" stroke="#666" stroke-width="1" fill="none"/><path d="M3.5 4l-3 2.5 3 2.5" stroke="#666" stroke-width="1" fill="none"/><path d="M3.5 2.5h2.5v2" stroke="#999" stroke-width=".8" fill="none"/></svg>
<div class="a" style="left:933px;top:706px;width:147px;height:22px;background:#efefef;border-left:1px solid #8a8a8a;border-top:1px solid #8a8a8a"></div>
<div class="a" style="left:934px;top:707px;width:47px;height:21px;background:#fdfbe4"></div>
<div class="a" style="left:981px;top:707px;width:1px;height:21px;background:#8a8a8a"></div>
<div class="a" style="left:1063px;top:707px;width:1px;height:21px;background:#8a8a8a"></div>
<div class="t" style="left:966px;top:711px;color:#1a0a1a;font-size:11.6px">59M of 159M</div>
<svg style="left:1065px;top:708px" width="14" height="17"><path d="M1 3h12" stroke="#2a6ab8" stroke-width="2"/><path d="M5 1h4" stroke="#2a6ab8" stroke-width="1.5"/><path d="M2 4h10l-1 12h-8z" fill="#6aaae8" stroke="#2a5aa0" stroke-width=".9"/><path d="M5 6v8M7 6v8M9 6v8" stroke="#2a5aa0" stroke-width=".8"/></svg>
<div class="a" style="left:1082px;top:709px;width:1px;height:2px;background:#888"></div>
<div class="a" style="left:1082px;top:713px;width:1px;height:2px;background:#888"></div>
<div class="a" style="left:1082px;top:717px;width:1px;height:2px;background:#888"></div>
<div class="a" style="left:1082px;top:721px;width:1px;height:2px;background:#888"></div>
<div class="a" style="left:0;top:728px;width:1366px;height:40px;background:#c4a070"></div>
<div class="a" style="left:0;top:728px;width:80px;height:40px;background:#c8a97c;clip-path:polygon(0 0,74.5px 0,62.8px 40px,0 40px)"></div>
<div class="a" style="left:178px;top:728px;width:557px;height:35px;background:#bdbcbb"></div>
<div class="a" style="left:186px;top:728px;width:469px;height:27px;background:#6a6866"></div>
<div class="a" style="left:655px;top:728px;width:80px;height:27px;background:#7d7c7b"></div>
<div class="a" style="left:178px;top:763px;width:487px;height:5px;background:#c29d6c"></div>
<div class="a" style="left:665px;top:763px;width:70px;height:5px;background:#b4aea6"></div>
<div class="a" style="left:735px;top:728px;width:100px;height:40px;background:#8e8c8a"></div>
<div class="a" style="left:735px;top:755px;width:100px;height:13px;background:#b2b0ae"></div>
<div class="a" style="left:835px;top:728px;width:23px;height:40px;background:#c2bab2"></div>
<div class="a" style="left:858px;top:728px;width:508px;height:40px;background:linear-gradient(28.6deg,#c9c1b8 0%,#c4bab1 66%,#d9c08c 67%,#d3b67c 80%,#cfb077 100%)"></div>
<div class="a" style="left:113px;top:728px;width:60px;height:40px;border:1px solid rgba(60,40,20,.35)"></div>
<div class="a" style="left:114px;top:729px;width:58px;height:38px;border:1px solid rgba(255,255,255,.6);background:rgba(255,235,200,.22)"></div>
<div class="a" style="left:237px;top:728px;width:60px;height:40px;border:1px solid rgba(60,40,20,.35)"></div>
<div class="a" style="left:238px;top:729px;width:58px;height:38px;border:1px solid rgba(255,255,255,.6);background:rgba(255,255,255,.16)"></div>
<div class="a" style="left:733px;top:728px;width:60px;height:40px;border:1px solid rgba(60,40,20,.35)"></div>
<div class="a" style="left:734px;top:729px;width:58px;height:38px;border:1px solid rgba(255,255,255,.6);background:rgba(255,255,255,.22)"></div>
<div class="a" style="left:795px;top:728px;width:60px;height:40px;border:1px solid rgba(60,40,20,.35)"></div>
<div class="a" style="left:796px;top:729px;width:58px;height:38px;border:1px solid rgba(255,255,255,.6);background:rgba(255,255,255,.12)"></div>
<svg style="left:0;top:728px" width="860" height="40" viewBox="0 728 860 40"><path d="M11.5 738.2L23 736.6V746.7H11.5zM24 736.4L38.5 734.4V746.7H24zM11.5 747.7H23V757.8L11.5 756.4zM24 747.7H38.5V760.2L24 758.2z" fill="#fff"/><ellipse cx="82" cy="747" rx="17" ry="6.5" transform="rotate(-42 82 747)" fill="none" stroke="#f0a818" stroke-width="2.4"/><circle cx="83" cy="748" r="12.5" fill="#1c80d4"/><circle cx="83" cy="748" r="11.3" fill="#46a8ee"/><path d="M76.5 745.5a6 4.6 0 0 1 12 0z" fill="#c4a070"/><path d="M75 745.5h18" stroke="#1a6cc0" stroke-width="1.3"/><path d="M78 749.3h20v3.2h-20z" fill="#c4a070"/><path d="M73 752q3 7 10 7q6 0 9-4" stroke="#1c80d4" stroke-width="1" fill="none"/><path d="M68 758q-2-4 8-13" stroke="#f0a818" stroke-width="2.4" fill="none"/><path d="M129 740h12l2 2h14v22h-28z" fill="#e8c466"/><rect x="131" y="736" width="12" height="4" fill="#fff"/><rect x="131" y="736" width="3" height="2" fill="#22b030"/><rect x="138" y="738" width="12" height="4" fill="#fff"/><rect x="140" y="738" width="3" height="2" fill="#d03020"/><rect x="145" y="740" width="12" height="4" fill="#fff"/><rect x="147" y="740" width="3" height="2" fill="#30a0e0"/><path d="M128 742h8l2 2h20v19h-30z" fill="#f8e8a0"/><path d="M131.5 763v-10h23v10h-5v-5.5h-13v5.5z" fill="#6ab8f4" stroke="#3a88d4" stroke-width=".9"/><rect x="197" y="738" width="20" height="24" fill="#a8cdec" stroke="#6aa8e0" stroke-width=".8"/><rect x="192" y="737" width="20" height="24" fill="#c8e2f6" stroke="#6aa8e0" stroke-width=".8"/><circle cx="202" cy="748.5" r="8.5" fill="#f07818"/><path d="M199 743v11l8.5-5.5z" fill="#fff"/><circle cx="266" cy="748" r="14" fill="#3aa84a"/><path d="M266 748L253.9 741A14 14 0 0 1 278.1 741z" fill="#e53935"/><path d="M266 748L278.1 741A14 14 0 0 1 266 762z" fill="#fcd116"/><circle cx="266" cy="748" r="6.3" fill="#fff"/><circle cx="266" cy="748" r="4.9" fill="#3a7ad8"/><defs><linearGradient id="ffg" x1="0" y1="0" x2="0" y2="1"><stop offset="0" stop-color="#48b4ec"/><stop offset=".55" stop-color="#2a6cc4"/><stop offset="1" stop-color="#1a2a80"/></linearGradient></defs><circle cx="329" cy="748" r="14.5" fill="#e4601a"/><circle cx="331.5" cy="745.5" r="11" fill="url(#ffg)"/><path d="M316 742q1-6 5-8q-2 4 0 7q3 1 4 4q1 4-2 6q3 4 9 3q6-1 9-7q0 9-9 13q-10 3-15-4q-3-6-1-14z" fill="#ee7a20"/><path d="M320 736l1-3 2 3z" fill="#ee7a20"/><path d="M341.5 740q3.5 6 0.5 13" stroke="#f8c830" stroke-width="2" fill="none"/><path d="M391 733a13.5 15 0 1 0 0.01 0zM391 737.2a4.6 10.8 0 1 1 -0.01 0z" fill="#e0262b" fill-rule="evenodd"/><path d="M450 733h6l6 25h-18z" fill="#f08818"/><path d="M448.6 739h8.8l1.6 6h-12zM446.4 748h13.2l1.6 6h-16.4z" fill="#e4e4e4"/><path d="M440 760l4-3h18l4 3v3h-26z" fill="#f49a18"/><rect x="501" y="733" width="28" height="26" fill="#7ac8f8"/><rect x="503" y="735" width="24" height="22" fill="#110c50"/><text x="506" y="752" font-family="Liberation Sans" font-weight="bold" font-size="14" fill="#7ac8f8">Ps</text><path d="M563 736l3-2h24v7l-3 2h-24z" fill="#b6d8ee"/><path d="M563 736l3-2h24l-3 2z" fill="#eef8fd"/><rect x="576" y="736" width="11" height="7" fill="#d6ecf8"/><path d="M563 743h24" stroke="#8ab8dc" stroke-width=".8"/><path d="M566 743l3-2h26v7l-3 2h-26z" fill="#b6d8ee"/><path d="M566 743l3-2h26l-3 2z" fill="#eef8fd"/><rect x="580" y="743" width="12" height="7" fill="#d6ecf8"/><path d="M566 750h26" stroke="#8ab8dc" stroke-width=".8"/><path d="M563 750l3-2h25v6l-3 2h-25z" fill="#b6d8ee"/><path d="M563 750l3-2h25l-3 2z" fill="#eef8fd"/><rect x="577" y="750" width="11" height="6" fill="#d6ecf8"/><path d="M563 756h25" stroke="#8ab8dc" stroke-width=".8"/><path d="M566 756l3-2h22v7l-3 2h-22z" fill="#b6d8ee"/><path d="M566 756l3-2h22l-3 2z" fill="#eef8fd"/><rect x="578" y="756" width="10" height="7" fill="#d6ecf8"/><path d="M566 763h22" stroke="#8ab8dc" stroke-width=".8"/><path d="M622 741.5l7-4 9 7 12.5-12.5 6 3v26l-6 3-12.5-12.5-9 7-7-4z" fill="#fff"/><path d="M624 742.6l5-2.6 9.3 7.6 12.4-12.6 4.3 2.1v23.6l-4.3 2.1-12.4-12.6-9.3 7.6-5-2.6z" fill="#6c2b92"/><path d="M627.5 744.5v7.5l5-3.75z" fill="#fff"/><path d="M639.5 748.25l7.5-6.5v13z" fill="#fff"/><defs><linearGradient id="ecg" x1="0" y1="0" x2="0" y2="1"><stop offset="0" stop-color="#9a82c8"/><stop offset=".3" stop-color="#4e2c88"/><stop offset=".55" stop-color="#5a3a94"/><stop offset="1" stop-color="#c4aee6"/></linearGradient></defs><circle cx="701.5" cy="747.5" r="15" fill="#2e1a58"/><circle cx="701.5" cy="747.5" r="14" fill="url(#ecg)"/><path d="M688 744.5h27M687.5 747.5h28M688 750.5h27" stroke="#f4eefc" stroke-width="1.3"/><circle cx="763" cy="748" r="14" fill="#5e8a14"/><circle cx="763" cy="747.5" r="12.6" fill="#a6d838"/><path d="M763 736v24" stroke="#c8f060" stroke-width="5" opacity=".8"/><path d="M761 740q-3 0-3 3v2.5l-2.5 2.5 2.5 2.5v2.5q0 3 3 3M765 740q3 0 3 3v2.5l2.5 2.5-2.5 2.5v2.5q0 3-3 3" stroke="#1a1a40" stroke-width="2" fill="none"/><circle cx="825" cy="748" r="14" fill="#2a5a10"/><circle cx="825" cy="748" r="12.8" fill="#80c030"/><circle cx="825" cy="746" r="11" fill="#1a1a1a"/><path d="M814 744h22" stroke="#666" stroke-width="0"/><text x="815" y="750" font-family="Liberation Mono" font-weight="bold" font-size="7.6" fill="#fff">AND_</text><path d="M812 755h26v3q-6 4-13 4t-13-4z" fill="#4a8a18"/><circle cx="818" cy="757.5" r="1.3" fill="#c8f070"/><circle cx="823" cy="758.5" r="1.3" fill="#c8f070"/><circle cx="828" cy="758.5" r="1.3" fill="#c8f070"/><circle cx="833" cy="757.5" r="1.3" fill="#c8f070"/></svg>
<svg style="left:1160px;top:730px" width="130" height="38" viewBox="1160 730 130 38"><path d="M1171.5 751.5l4.5-5 4.5 5z" fill="#fff" stroke="#666" stroke-width=".8"/><path d="M1192.5 741.5h2v15h-2z" fill="#fff" stroke="#555" stroke-width=".8"/><path d="M1194.5 742.5h6l1.5 2h5l-1.5 4-3 2h-5l-3-1z" fill="#fff" stroke="#555" stroke-width=".8"/><path d="M1217 741.5v3M1220 741.5v3M1216 744.5h5v4h-1.5v7.5h-2v-7.5h-1.5z" fill="#fff" stroke="#555" stroke-width=".8"/><path d="M1222.5 743.5h2v-1.5h5v1.5h2v12.5h-9z" fill="#fff" stroke="#555" stroke-width=".8"/><rect x="1224.5" y="745.5" width="5" height="8.5" fill="none" stroke="#555" stroke-width=".8"/><path d="M1240.5 751.5h2v2.5h-2zM1243.5 749.5h2v4.5h-2zM1246.5 747.5h2v6.5h-2zM1249.5 745.5h2v8.5h-2zM1252.5 743.5h2.5v10.5h-2.5z" fill="#fff" stroke="#555" stroke-width=".8"/><path d="M1264 745.5h3.5l4.5-4v15l-4.5-4h-3.5z" fill="#fff" stroke="#555" stroke-width=".8"/><path d="M1274 746q1.5 2.5 0 5M1276.5 744q3 4.5 0 9M1279 742q4 6.5 0 13" stroke="#fff" stroke-width="1.3" fill="none"/></svg>
<div class="t" style="left:1302px;top:736px;color:#fff;font-size:12px">8:34 PM</div>
<div class="t" style="left:1297px;top:753px;color:#fff;font-size:12px">2/26/2014</div>
</body></html>
